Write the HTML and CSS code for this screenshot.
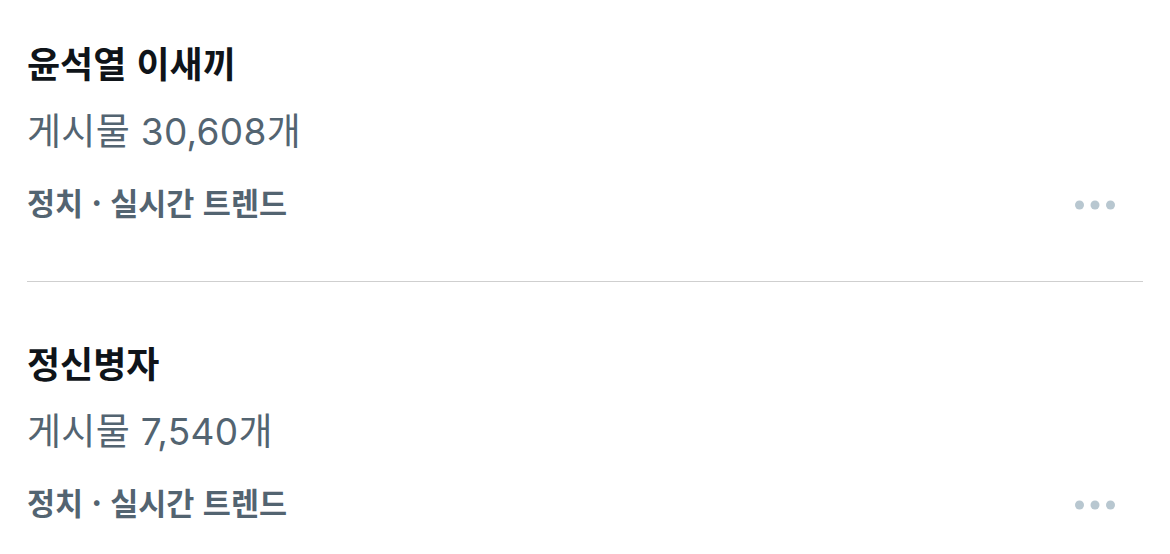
FILE: index.html
```html
<!DOCTYPE html>
<html lang="ko">

<head>
    <meta charset="UTF-8" />
    <title>실시간 트렌드</title>
    <link rel="stylesheet" href="styles.css">
</head>

<body>
    <div class="trend-list">
        <div class="trend">
            <div class="trend-title">윤석열 이새끼</div>
            <div class="trend-count">게시물 30,608개</div>
            <div class="trend-meta">
                <span>정치 · 실시간 트렌드</span>
                <svg class="more" width="40" height="10" viewBox="0 0 40 10">
                    <circle cx="4.5" cy="5" r="4.5" />
                    <circle cx="20" cy="5" r="4.5" />
                    <circle cx="35.5" cy="5" r="4.5" />
                </svg>
            </div>
        </div>
        <div class="trend">
            <div class="trend-title">정신병자</div>
            <div class="trend-count">게시물 7,540개</div>
            <div class="trend-meta">
                <span>정치 · 실시간 트렌드</span>
                <svg class="more" width="40" height="10" viewBox="0 0 40 10">
                    <circle cx="4.5" cy="5" r="4.5" />
                    <circle cx="20" cy="5" r="4.5" />
                    <circle cx="35.5" cy="5" r="4.5" />
                </svg>
            </div>
        </div>
    </div>
</body>

</html>
```

FILE: styles.css
```css
html,
body {
    margin: 0;
    padding: 0;
    background: #fff;
    font-family: "Noto Sans CJK KR", "Noto Sans", sans-serif;
}

.trend-list {
    padding: 27px 27px 0;
}

.trend {
    padding-bottom: 44px;
}

/* divider between items */
.trend + .trend {
    border-top: 1px solid #cfcfcf;
    padding-top: 45px;
}

.trend-title {
    font-size: 36px;
    line-height: 70px;
    font-weight: 700;
    color: #0f1419;
}

/* Inter for the digits, CJK font for the hangul */
.trend-count {
    font-family: Inter, "Noto Sans CJK KR", sans-serif;
    font-size: 37px;
    line-height: 70px;
    letter-spacing: 0.3px;
    color: #536471;
}

.trend-meta {
    display: flex;
    justify-content: space-between;
    align-items: center;
    height: 70px;
    padding-right: 28px;
    font-size: 30.5px;
    font-weight: 700;
    color: #536471;
}

.more {
    fill: #b8c7d0;
    margin-top: 5px;
}
```
